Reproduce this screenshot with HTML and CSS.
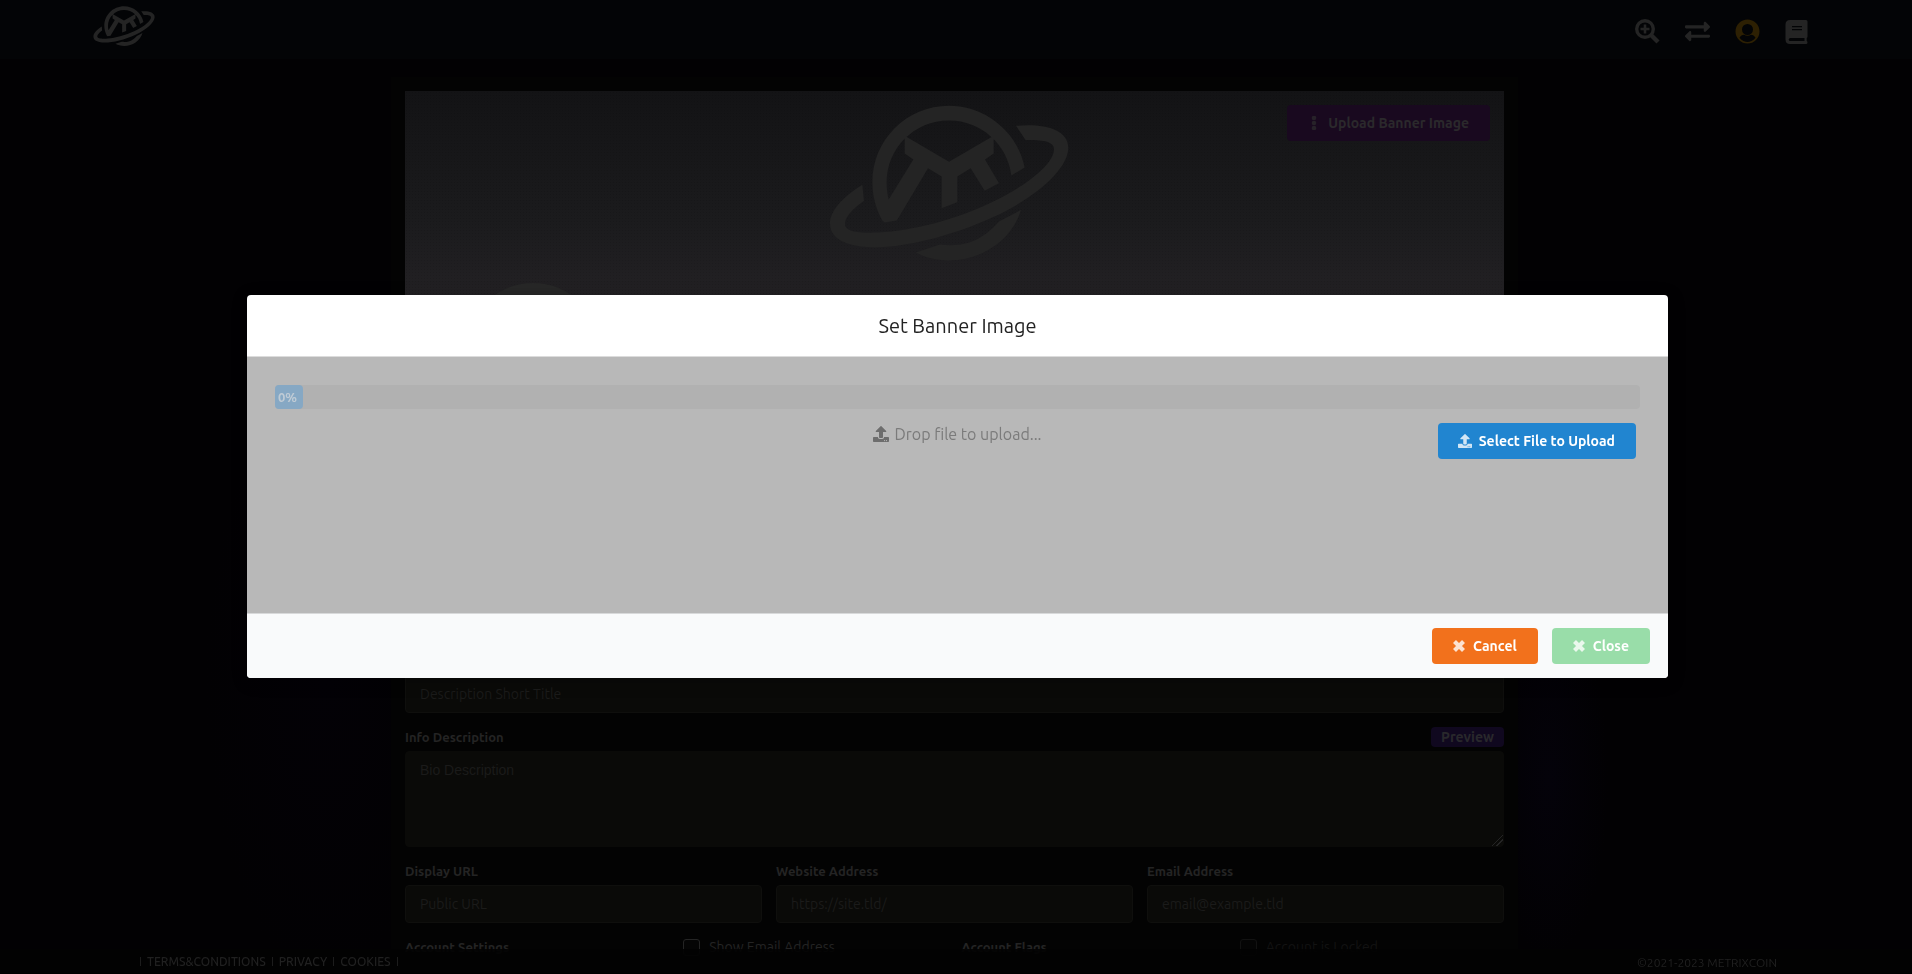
FILE: index.html
```html
<!DOCTYPE html>
<html lang="en">
<head>
<meta charset="utf-8">
<title>Set Banner Image</title>
<meta name="viewport" content="width=device-width, initial-scale=1">
<link rel="stylesheet" href="styles.css">
</head>
<body>
<svg class="sprite" aria-hidden="true">
  <symbol id="logo" viewBox="145 75 720 467">
    <path d="M305 421C285 385 275 345 275 307C275 180 377 77 505 77C615 77 711 156 732 262L692 286C681 193 601 121 505 121C401 121 318 204 318 307C318 325 320 342 324 358L398 238L372 220V167L505 245L639 167V220L613 238L655 309L612 332L570 264L530 289V366L483 384V289L442 264L354 412L348 421L312 427Z"/>
    <path d="M706 137C785 129 863 145 863 203C863 265 770 350 640 410C500 475 340 510 250 500C190 494 148 473 148 430C148 392 187 350 245 314L250 362C215 388 193 410 193 432C193 455 240 459 290 457C400 452 520 420 630 368C740 316 820 250 820 207C820 183 780 179 735 180Z"/>
    <path d="M405 517L478 493C550 501 600 485 655 424L721 389C695 480 603 540 508 541C468 541 434 533 405 517Z"/>
  </symbol>
  <symbol id="upload" viewBox="0 0 512 512"><path d="M296 384h-80c-13.3 0-24-10.7-24-24V192h-87.7c-17.8 0-26.7-21.5-14.1-34.1L242.3 5.7c7.5-7.5 19.8-7.5 27.3 0l152.2 152.2c12.6 12.6 3.7 34.1-14.1 34.1H320v168c0 13.3-10.7 24-24 24zm216-8v112c0 13.3-10.7 24-24 24H24c-13.3 0-24-10.7-24-24V376c0-13.3 10.7-24 24-24h136v8c0 30.9 25.1 56 56 56h80c30.9 0 56-25.1 56-56v-8h136c13.3 0 24 10.7 24 24zm-124 88c0-11-9-20-20-20s-20 9-20 20 9 20 20 20 20-9 20-20zm64 0c0-11-9-20-20-20s-20 9-20 20 9 20 20 20 20-9 20-20z"/></symbol>
  <symbol id="cross" viewBox="0 0 14 14"><path d="M2.500 2.500L11.500 11.500M11.500 2.500L2.500 11.500" fill="none" stroke="currentColor" stroke-width="4.200"/></symbol>
</svg>

<header class="topbar">
  <a href="#" class="brand" aria-label="Home"><svg class="brand-logo"><use href="#logo"/></svg></a>
  <nav class="topnav">
    <a href="#" aria-label="Search"><svg viewBox="0 0 25 25"><circle cx="10" cy="10" r="8.3" fill="none" stroke="currentColor" stroke-width="3.4"/><path d="M16 16L23 23" stroke="currentColor" stroke-width="4.4"/><path d="M10 5.5V14.5M5.500 10H14.500" stroke="currentColor" stroke-width="2.600"/></svg></a>
    <a href="#" aria-label="Swap"><svg viewBox="0 0 512 512"><path d="M0 168v-16c0-13.255 10.745-24 24-24h360V80c0-21.367 25.899-32.042 40.971-16.971l80 80c9.372 9.373 9.372 24.569 0 33.941l-80 80C409.956 271.982 384 261.456 384 240v-48H24c-13.255 0-24-10.745-24-24zm488 152H128v-48c0-21.314-25.862-32.08-40.971-16.971l-80 80c-9.372 9.373-9.372 24.569 0 33.941l80 80C102.057 463.997 128 453.437 128 432v-48h360c13.255 0 24-10.745 24-24v-16c0-13.255-10.745-24-24-24z"/></svg></a>
    <a href="#" class="account" aria-label="Account"><svg viewBox="0 0 25 25"><path fill-rule="evenodd" d="M12.500 0.500A12 12 0 1 1 12.500 24.500A12 12 0 1 1 12.500 0.500ZM12.500 5A5.500 5.500 0 1 0 12.500 16A5.500 5.500 0 1 0 12.500 5ZM4.500 18.800C7 22 10 23 12.500 23C15 23 18 22 20.500 18.800C19.500 16.500 17.700 15.700 16 15.700C14 17.200 11 17.200 9 15.700C7.300 15.700 5.500 16.500 4.500 18.800Z"/></svg></a>
    <a href="#" aria-label="Guide"><svg viewBox="0 0 25 25"><path fill-rule="evenodd" d="M5 1H21Q22.500 1 22.500 2.500V17.500Q22.500 18.500 21.700 19V22Q22.500 22.300 22.500 23.500Q22.500 25 21 25H5Q0.500 25 0.500 20.500V5.500Q0.500 1 5 1ZM7 7V8.200H17V7ZM7 10V11.200H17V10ZM5.500 19Q3.700 19 3.700 20.500Q3.700 22 5.500 22H19.500V19Z"/></svg></a>
  </nav>
</header>

<main class="page">
  <section class="panel">
    <div class="banner">
      <svg class="banner-logo"><use href="#logo"/></svg>
      <button type="button" class="btn banner-btn"><svg class="btn-icon" viewBox="0 0 14 14"><circle cx="7" cy="2" r="2.300"/><circle cx="7" cy="7" r="2.300"/><circle cx="7" cy="12" r="2.300"/></svg>Upload Banner Image</button>
      <div class="avatar"></div>
    </div>
    <form class="profile">
      <input type="text" class="field-input" placeholder="Description Short Title" aria-label="Description Short Title">
      <div class="field">
        <div class="label-row"><label for="bio">Info Description</label><button type="button" class="preview">Preview</button></div>
        <textarea id="bio" class="field-input bio" placeholder="Bio Description"></textarea>
      </div>
      <div class="three">
        <div class="field"><label for="url">Display URL</label><input id="url" type="text" class="field-input" placeholder="Public URL"></div>
        <div class="field"><label for="site">Website Address</label><input id="site" type="text" class="field-input" placeholder="https://site.tld/"></div>
        <div class="field"><label for="email">Email Address</label><input id="email" type="email" class="field-input" placeholder="email@example.tld"></div>
      </div>
      <div class="four">
        <strong>Account Settings</strong>
        <label class="check"><input type="checkbox">Show Email Address</label>
        <strong>Account Flags</strong>
        <label class="check locked"><input type="checkbox" disabled>Account is Locked</label>
      </div>
    </form>
  </section>
</main>

<footer class="bottombar">
  <nav class="legal"><a href="#">TERMS&amp;CONDITIONS</a><a href="#">PRIVACY</a><a href="#">COOKIES</a></nav>
  <span>©2021-2023 METRIXCOIN</span>
</footer>

<div class="overlay">
  <div class="modal" role="dialog" aria-modal="true" aria-labelledby="modal-title">
    <h2 class="modal-title" id="modal-title">Set Banner Image</h2>
    <div class="modal-body">
      <div class="progress" role="progressbar" aria-label="Upload progress" aria-valuenow="0"><div class="bar">0%</div></div>
      <div class="drop-row">
        <p class="drop-text"><svg><use href="#upload"/></svg>Drop file to upload...</p>
        <button type="button" class="btn select-btn"><svg class="btn-icon"><use href="#upload"/></svg>Select File to Upload</button>
      </div>
    </div>
    <div class="modal-actions">
      <button type="button" class="btn cancel"><svg class="btn-icon"><use href="#cross"/></svg>Cancel</button>
      <button type="button" class="btn close"><svg class="btn-icon"><use href="#cross"/></svg>Close</button>
    </div>
  </div>
</div>
</body>
</html>
```
FILE: styles.css
```css
* { box-sizing: border-box; }

body {
  margin: 0;
  overflow: hidden;
  font: 14px/20px Ubuntu, "Open Sans", "Noto Sans", sans-serif;
  color: #242424;
  background:
    radial-gradient(ellipse 60px 180px at 81% 80%, #04020a, transparent),
    radial-gradient(ellipse 120px 300px at 17% 70%, #030106, transparent),
    #020103;
}

a { color: inherit; text-decoration: none; }
svg { fill: currentColor; }
.sprite { display: none; }

.topbar {
  position: fixed;
  inset: 0 0 auto;
  z-index: 1;
  height: 59px;
  padding: 0 102px 0 93px;
  display: flex;
  align-items: flex-start;
  justify-content: space-between;
  background: #030406;
}
.brand-logo { display: block; width: 62px; height: 40px; margin-top: 6px; }
.topnav { display: flex; gap: 25px; padding-top: 19px; }
.topnav svg { display: block; width: 25px; height: 25px; }
.account { color: #2d2003; }

.page { height: 100vh; padding: 77px 3px 0 0; overflow: hidden; }
.panel {
  width: 1127px;
  max-width: 100%;
  margin: 0 auto;
  padding: 14px;
  background: #030303;
}

.banner {
  position: relative;
  height: 260px;
  overflow: hidden;
  display: flex;
  justify-content: center;
  background:
    radial-gradient(#0000001a 1px, transparent 1px) 0 0 / 3px 3px,
    linear-gradient(#131315, #1b1b1d 50%, #232124 80%);
}
.banner-logo { width: 240px; height: 156px; margin: 14px 12px 0 0; }
.avatar {
  position: absolute;
  top: 192px;
  left: 60px;
  width: 136px;
  height: 136px;
  border-radius: 50%;
  background: #272727;
}

.profile { display: flex; flex-direction: column; gap: 14px; padding-top: 324px; }
.field-input {
  display: block;
  width: 100%;
  height: 38px;
  padding: 8px 14px;
  border: 1px solid #0f0f0d;
  border-radius: 4px;
  background: #0a0a08;
  color: #242424;
  font: inherit;
}
.field-input::placeholder { color: #1b1b1a; opacity: 1; }
.bio { height: 96px; font-family: "Liberation Sans", Arial, sans-serif; border-color: #0a0a08; }
.bio::-webkit-resizer {
  background: linear-gradient(135deg, transparent 60%, #242424 60% 64%, transparent 64% 76%, #242424 76% 80%, transparent 80%);
}
.field { display: flex; flex-direction: column; gap: 4px; }
.field label, .four strong { font-size: 13px; font-weight: 700; }
.label-row { display: flex; justify-content: space-between; }
.preview {
  height: 20px;
  padding: 0 10px;
  border: 0;
  border-radius: 4px;
  background: #10081f;
  color: #29282c;
  font: 700 14px/20px Ubuntu, "Open Sans", sans-serif;
}
.three { display: grid; grid-template-columns: repeat(3, 1fr); gap: 14px; }
.four { display: grid; grid-template-columns: repeat(4, 1fr); margin-right: -14px; }
.check { display: flex; align-items: center; gap: 9px; }
.check input {
  appearance: none;
  width: 17px;
  height: 17px;
  margin: 0;
  border: 1px solid #242424;
  border-radius: 3px;
  background: #050505;
}
.locked { color: #121212; }
.locked input { border-color: #121212; }

.bottombar {
  position: fixed;
  inset: auto 0 0;
  height: 25px;
  padding: 0 135px 0 140px;
  display: flex;
  justify-content: space-between;
  color: #202020;
  font-size: 12px;
  line-height: 27px;
  background: #030303d0;
  border-bottom: 1px solid #000;
  backdrop-filter: blur(10px);
}
.legal { display: flex; align-items: center; gap: 6px; font-weight: 500; }
.legal a { display: flex; align-items: center; gap: 6px; }
.legal::before, .legal a::after { content: ""; width: 1px; height: 9px; background: #1c1c1c; }

.overlay {
  position: fixed;
  inset: 0;
  z-index: 2;
  padding: 0 244px 2px 247px;
  display: flex;
  align-items: center;
}
.modal {
  width: 100%;
  overflow: hidden;
  border-radius: 4px;
  background: #fff;
  box-shadow: 1px 3px 15px 2px #0003;
}
.modal-title {
  margin: 0;
  padding: 16px;
  border-bottom: 1px solid #dcdcdc;
  color: #222;
  font-size: 20px;
  line-height: 29px;
  font-weight: 400;
  text-align: center;
}
.modal-body { height: 256px; padding: 28px; background: #b8b8b8; }
.progress { border-radius: 4px; background: #b1b1b1; }
.bar {
  width: 28px;
  padding-left: 3px;
  border-radius: 4px;
  background: #86a8c4;
  color: #bfcbd5;
  font-size: 13px;
  font-weight: 700;
  line-height: 24px;
}
.drop-row {
  display: grid;
  grid-template-columns: 1fr auto 1fr;
  align-items: start;
  padding: 14px 4px 0;
}
.drop-text {
  grid-column: 2;
  display: flex;
  align-items: center;
  gap: 5px;
  margin: 0;
  color: #7b7b7b;
  font-size: 16px;
  line-height: 22px;
}
.drop-text svg { width: 16px; height: 16px; color: #6d6d6d; }
.btn {
  display: flex;
  align-items: center;
  gap: 7px;
  height: 36px;
  padding: 0 21px 0 20px;
  border: 0;
  border-radius: 4px;
  color: #fff;
  font: 700 14px/20px Ubuntu, "Open Sans", sans-serif;
}
.btn-icon { width: 14px; height: 14px; opacity: 0.8; }
.banner-btn { position: absolute; top: 14px; right: 14px; background: #19091f; color: #2b292c; }
.select-btn { justify-self: end; background: #2185d0; }
.modal-actions {
  display: flex;
  justify-content: flex-end;
  gap: 14px;
  padding: 14px 18px;
  border-top: 1px solid #d8d9da;
  background: #f9fafb;
}
.cancel { background: #f2711c; }
.close { background: #99dda9; }
```
